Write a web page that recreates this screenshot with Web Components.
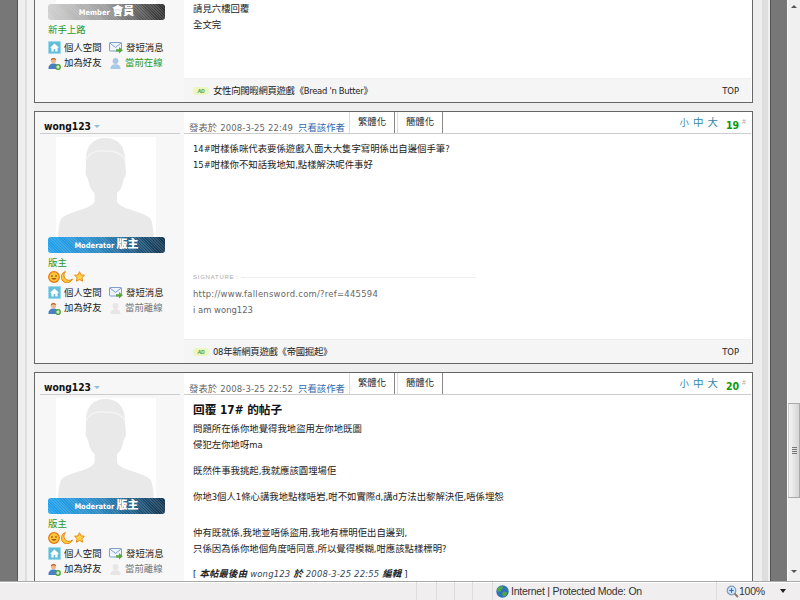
<!DOCTYPE html>
<html lang="zh-Hant"><head><meta charset="utf-8"><title>Forum</title>
<style>
html,body{margin:0;padding:0;height:100%;overflow:hidden;background:#eee}
body{font:9.4px/15.6px "DejaVu Sans","Noto Sans CJK TC",sans-serif;font-stretch:condensed;color:#222}
</style></head><body>
<forum-window>
  <forum-post cut footer="女性向闊暇網頁遊戲《Bread 'n Butter》" badge="Member 會員" tone="grey" rank="新手上路" online style="height:103px">
    <p class="tight">請見六樓回覆</p><p class="tight">全文完</p>
  </forum-post>
  <forum-post name="wong123" time="2008-3-25 22:49" num="19" footer="08年新網頁遊戲《帝國掘起》" badge="Moderator 版主" tone="blue" rank="版主" stars style="height:253px">
    <p class="tight">14#咁樣係咪代表要係遊戲入面大大隻字寫明係出自邊個手筆?</p>
    <p class="tight">15#咁樣你不知話我地知,點樣解決呢件事好</p>
    <post-signature>
      <div style="letter-spacing:.25px">http://www.fallensword.com/?ref=445594</div><div>i am wong123</div>
    </post-signature>
  </forum-post>
  <forum-post name="wong123" time="2008-3-25 22:52" num="20" badge="Moderator 版主" tone="blue" rank="版主" stars style="height:270px">
    <h2>回覆 17# 的帖子</h2>
    <p class="tight">問題所在係你地覺得我地盜用左你地既圖</p>
    <p>侵犯左你地呀ma</p>
    <p>既然件事我挑起,我就應該圓埋場佢</p>
    <p style="margin-bottom:21px">你地3個人1條心講我地點樣唔岩,咁不如實際d,講d方法出黎解決佢,唔係埋怨</p>
    <p class="tight">仲有既就係,我地並唔係盜用,我地有標明佢出自邊到,</p>
    <p style="margin-bottom:9.5px">只係因為係你地個角度唔同意,所以覺得模糊,咁應該點樣標明?</p>
    <p style="letter-spacing:.2px">[ <i><b>本帖最後由</b> <span style="color:#345">wong123</span> <b>於</b> <span style="color:#345">2008-3-25 22:55</span> <b>編輯</b></i> ]</p>
  </forum-post>
</forum-window>
<script>
const ICONS={
home:'<svg width="13" height="13" viewBox="0 0 13 13"><rect width="13" height="13" rx="2" fill="#62bddb"/><rect x=".5" y=".5" width="12" height="12" rx="1.5" fill="none" stroke="#9fdaec"/><path d="M6.5 2.6 2 6.8h1.4v3.8h2.3V8h1.6v2.6h2.3V6.8H11z" fill="#fff"/></svg>',
mail:'<svg width="14" height="13" viewBox="0 0 14 13"><rect x=".5" y="1.5" width="12" height="8.5" rx=".8" fill="#eef4fb" stroke="#7f9fcb"/><path d="M.8 2 6.5 6.4 12.2 2" fill="none" stroke="#7f9fcb"/><path d="M7 8.2h3V6l3.8 3.3L10 12.6v-2H7z" fill="#58a83a"/></svg>',
add:'<svg width="13" height="13" viewBox="0 0 13 13"><circle cx="5.5" cy="3.4" r="2.7" fill="#eeb98a"/><path d="M2.8 3C2.9.7 8 .4 8.2 3 6.8 2 4.5 2 2.8 3z" fill="#a8521e"/><path d="M.5 12c-.4-3.6 2-5.5 5-5.5s4.600 1.500 4.600 5.500z" fill="#4a7fc4"/><circle cx="10" cy="10" r="2.900" fill="#48a030"/><path d="M10 8.300v3.400M8.300 10h3.400" stroke="#fff" stroke-width="1.100"/></svg>',
online:'<svg width="13" height="13" viewBox="0 0 13 13"><circle cx="6.500" cy="4" r="2.900" fill="#a9c8e6"/><path d="M1.500 12c0-3.500 2.200-4.800 5-4.800s5 1.300 5 4.800z" fill="#a9c8e6"/></svg>',
offline:'<svg width="13" height="13" viewBox="0 0 13 13"><circle cx="6.500" cy="4" r="2.900" fill="#e6e6e6"/><path d="M1.500 12c0-3.500 2.200-4.800 5-4.800s5 1.300 5 4.800z" fill="#e6e6e6"/></svg>',
sun:'<svg width="12" height="12" viewBox="0 0 12 12"><circle cx="6" cy="6" r="5.300" fill="#ffc83c" stroke="#e8740c" stroke-width="1.200"/><path d="M3 5h2M7 5h2" stroke="#8a3c00"/><path d="M3.500 7.200h5C8 9 4 9 3.500 7.200z" fill="#8a3c00"/></svg>',
moon:'<svg width="12" height="12" viewBox="0 0 12 12"><path d="M4.500.6A5.700 5.700 0 1 0 11.400 8 5 5 0 0 1 4.500.6z" fill="#ffc83c" stroke="#e8840c"/></svg>',
star:'<svg width="11" height="11" viewBox="0 0 11 11"><path d="m5.500.7 1.500 3.200 3.400.4-2.500 2.400.7 3.500-3.100-1.800-3.100 1.800.7-3.500L.6 4.300 4 3.900z" fill="#ffd24c" stroke="#ea8a10"/></svg>',
globe:'<svg width="13" height="13" viewBox="0 0 13 13"><circle cx="6.500" cy="6.500" r="6.200" fill="#2f72b8"/><path d="M3 2c2-1 4-1 4 .5S5 4 5 5.500 3 7 1.500 6.500 1.500 3 3 2zM7 7c2-.5 4 0 4 1.500S9 12 7.500 11.500 6 8 7 7z" fill="#4fa74a"/></svg>',
zoom:'<svg width="13" height="13" viewBox="0 0 13 13"><circle cx="5.500" cy="5.500" r="4.300" fill="#cfe3f7" stroke="#7d9cc0" stroke-width="1.200"/><path d="M5.500 3.300v4.400M3.300 5.500h4.400" stroke="#2e6fc0" stroke-width="1.200"/><path d="m8.500 8.500 3.500 3.500" stroke="#8a7a60" stroke-width="1.800"/></svg>',
avatar:'<svg width="100" height="100" viewBox="0 0 100 100"><rect width="100" height="100" fill="#fff"/><path d="M30 23C30 6 40 1 49.500 1S69 6 69 23c0 4 .7 8 1 12 .4 4-2 5.500-2.500 8-1 5-2.500 10-6.500 13v7.500c0 3 3 5 10 8 10 3.500 21 6 24 11 1.500 4 2.500 10 2.700 17.500H2c.3-7.500 1.300-13.500 2.700-17.500 3-5 14-7.500 24-11 7-3 10-5 10-8V56c-4-3-5.500-8-6.500-13-.5-2.500-2.900-4-2.500-8 .3-4 .3-8 .3-12z" fill="#e9e9e9"/><path d="M30 23c3-8 12-10 20-9 8 0 16 2 19 9" fill="none" stroke="#f3f3f3" stroke-width="1.500"/></svg>'
};
function def(name,css,html){
  customElements.define(name,class extends HTMLElement{
    connectedCallback(){
      if(this.shadowRoot)return;
      const s=this.attachShadow({mode:'open'});
      s.innerHTML='<style>'+css+'</style>'+(typeof html==='function'?html(this):html);
    }
  });
}
const FONT='"DejaVu Sans","Noto Sans CJK TC",sans-serif';
def('ui-icon',':host{display:inline-flex;line-height:0;flex:none}',h=>ICONS[h.getAttribute('name')]||'');

def('forum-window',`
:host{display:flex;flex-direction:column;width:800px;height:600px;overflow:hidden;background:#eee}
.view{flex:1;min-height:0;display:flex}
.band{flex:none}
.posts{width:719px;flex:none;overflow:hidden;display:flex;flex-direction:column;gap:8px}
::slotted(forum-post){flex:none}
`,`<div class="view">
<div class="band" style="width:17px;background:#777"></div>
<div class="band" style="width:1px;background:#555"></div>
<div class="band" style="width:7px;background:#efefef"></div>
<div class="band" style="width:2px;background:#dedede"></div>
<div class="band" style="width:7px;background:#f2f2f2"></div>
<div class="posts"><slot></slot></div>
<div class="band" style="width:9px;background:#eee"></div>
<div class="band" style="width:6px;background:#dedede"></div>
<div class="band" style="width:2px;background:#efefef"></div>
<div class="band" style="width:1px;background:#555"></div>
<div class="band" style="width:16px;background:#777"></div>
<div class="band" style="width:1px;background:#fff"></div>
<page-scrollbar></page-scrollbar>
</div><status-bar></status-bar>`);

def('page-scrollbar',`
:host{display:flex;flex-direction:column;width:12px;flex:none;background:#f0f0f0}
.a{height:4px;display:flex;justify-content:center;flex:none}
.up{margin-top:5px;width:0;height:0;border:3px solid transparent;border-top:0;border-bottom:3px solid #555}
.dn{width:0;height:0;border:3px solid transparent;border-bottom:0;border-top:3px solid #555}
.track{flex:1}
.thumb{margin-top:399px;height:93px;border:1px solid #aaa;border-left-color:#ccc;background:linear-gradient(90deg,#f4f4f4,#d4d4d4);display:flex;flex-direction:column;justify-content:center;align-items:center;gap:1px}
.thumb i{display:block;width:5px;height:1px;background:#777}
.bottom{height:11px;flex:none;display:flex;justify-content:center}
`,`<div class="a"><div class="up"></div></div><div class="track"><div class="thumb"><i></i><i></i><i></i><i></i></div></div><div class="bottom"><div class="dn"></div></div>`);

def('status-bar',`
:host{display:flex;height:18px;flex:none;border-top:1px solid #a9a9a9;background:#f0eeee;font:10.5px/18px "Liberation Sans",sans-serif;color:#333;box-shadow:inset 0 1px 0 #fff}
.c{border-right:1px solid #dfdcdc;flex:none}
.z{display:flex;align-items:center;flex:1;padding-left:9px}
.net{display:flex;align-items:center;gap:2px;padding-left:3px;width:220px}
.t{letter-spacing:-.25px;white-space:nowrap}
.ar{width:0;height:0;border:3.5px solid transparent;border-bottom:0;border-top:4px solid #222;margin-left:15px}
`,`<div class="c" style="width:416px"></div><div class="c" style="width:19px"></div><div class="c" style="width:17px"></div><div class="c" style="width:17px"></div><div class="c" style="width:19px"></div>
<div class="c net"><ui-icon name="globe"></ui-icon><span class="t">Internet | Protected Mode: On</span></div>
<div class="z"><ui-icon name="zoom"></ui-icon><span class="t">100%</span><span class="ar"></span></div>`);

def('rank-badge',`
:host{display:block;margin-left:13px;width:117px;height:16px;border-radius:3px;color:#fff;font:bold 7.5px/16px ${FONT};font-stretch:condensed;text-align:center;overflow:hidden;position:relative}
:host([tone=grey]){background:linear-gradient(90deg,#cfcfcf,#9a9a9a 50%,#2e2e2e)}
:host([tone=blue]){background:linear-gradient(90deg,#1ea2ee,#2a8cc8 40%,#14344e)}
.h{position:absolute;inset:0;background:repeating-linear-gradient(45deg,rgba(255,255,255,.14) 0 1px,transparent 1px 2px)}
span{position:relative}
b{font-size:11px}
`,h=>{const [a,b]=h.textContent.trim().split(' ');return `<div class="h"></div><span>${a} <b>${b}</b></span>`});

def('user-links',`
:host{display:grid;grid-template-columns:61px 61px;margin-left:13px;line-height:15.4px}
div{display:flex;align-items:center;gap:3px;white-space:nowrap;height:15.4px}
.on{color:#2a9a2a}.off{color:#777}
`,h=>{const on=h.hasAttribute('online');return `<div><ui-icon name="home"></ui-icon>個人空間</div><div><ui-icon name="mail"></ui-icon>發短消息</div><div><ui-icon name="add"></ui-icon>加為好友</div><div><ui-icon name="${on?'online':'offline'}"></ui-icon><span class="${on?'on':'off'}">${on?'當前在線':'當前離線'}</span></div>`});

def('post-signature',`
:host{display:block;margin-top:100px;color:#666}
.s{display:flex;align-items:center;gap:2px;width:283px;height:10px;margin-bottom:4px;font:6px/10px "Liberation Sans",sans-serif;letter-spacing:.75px;color:#aaa;white-space:nowrap}
.s i{flex:1;height:1px;background:#eee}
`,`<div class="s">SIGNATURE :<i></i></div><slot></slot>`);

def('ad-tag',`
:host{display:inline-block;width:16px;height:8px;background:#eaf7c0;border-radius:4px 5px 5px 4px;color:#5a9a1a;font:bold italic 5px/8px "Liberation Sans",sans-serif;text-align:center;flex:none}
`,`AD`);

def('forum-post',`
:host{display:grid;grid-template-columns:149px 1fr;box-sizing:border-box;border:1px solid #666;background:#fff;overflow:hidden}
:host([cut]){border-top:0}
.side{background:#f7f7f7;min-width:0;display:flex;flex-direction:column}
.name{margin:0 4px 0 5px;height:22px;box-sizing:border-box;padding:8px 0 0 4px;border-bottom:1px solid #ccc;font:bold 10.2px/13px ${FONT};font-stretch:condensed;color:#111;display:flex;align-items:center;gap:3px}
.name i{width:0;height:0;border:3px solid transparent;border-bottom:0;border-top:3px solid #8cc0e0}
.av{margin:3px 0 0 21px;width:100px;height:100px;overflow:hidden;line-height:0;flex:none}
:host([cut]) .av{margin-top:0;height:4px;background:#fff}
:host([cut]) .av ui-icon{display:none}
.rank{margin:3px 0 0 13px;height:14px;line-height:14px;color:#2a9a2a}
.st{margin-left:13px;height:13px;display:flex;align-items:center;gap:1px}
user-links{margin-top:2px}
:host([cut]) user-links{margin-top:3px}
.main{min-width:0;display:flex;flex-direction:column}
.head{height:21px;margin-right:1px;flex:none;display:flex;align-items:flex-end;border-bottom:1.5px solid #ccc;padding-left:5px;color:#666;white-space:nowrap}
.meta{width:160px;line-height:14px;height:14px;margin-bottom:-2px;display:flex;gap:3px}
.meta .d{letter-spacing:.15px}
.meta a{color:#36a;margin-left:2px}
.tab{width:46px;height:21px;box-sizing:border-box;border-left:1px solid #ddd;border-right:1px solid #888;text-align:center;line-height:19px;color:#222;background:#fff}
.tab+.tab{margin-left:2px}
.size{margin-left:auto;display:flex;align-items:center;height:21px;color:#38a;gap:4px;line-height:1}
.size .s1{font-size:9.4px}.size .s2,.size .s3{font-size:10.5px}
.num{margin-left:8px;margin-right:5px;padding-bottom:2px;font:bold 10.5px/1 ${FONT};font-stretch:condensed;color:#0a9a0a;display:flex;align-self:center;padding-top:7px}
.num sup{font:normal 7px/7px "Liberation Sans",sans-serif;color:#aaa;margin-left:3px;margin-top:-2px}
.body{flex:1;min-height:0;padding:7px 9px 0;overflow:hidden}
:host([cut]) .body{padding-top:1px}
::slotted(p){margin:0 0 10.4px}
::slotted(p.tight){margin-bottom:0}
::slotted(h2){margin:0 0 3px;font:bold 11.7px/16px ${FONT};font-stretch:condensed;color:#111}
.foot{flex:none;height:24.5px;margin-right:1px;box-sizing:border-box;border-top:1px solid #eee;background:#f5f5f5;display:flex;align-items:center;gap:4px;padding:2px 12px 0 9px}
.foot .ft{letter-spacing:-.3px}
.foot .top{margin-left:auto;color:#222}
`,h=>{
  const g=n=>h.getAttribute(n);
  const stars=h.hasAttribute('stars');
  const cut=h.hasAttribute('cut');
  return `<div class="side">
  ${cut?'':`<div class="name">${g('name')}<i></i></div>`}
  <div class="av"><ui-icon name="avatar"></ui-icon></div>
  <rank-badge tone="${g('tone')}">${g('badge')}</rank-badge>
  <div class="rank">${g('rank')}</div>
  ${stars?'<div class="st"><ui-icon name="sun"></ui-icon><ui-icon name="moon"></ui-icon><ui-icon name="star"></ui-icon></div>':''}
  <user-links ${h.hasAttribute('online')?'online':''}></user-links>
</div>
<div class="main">
  ${cut?'':`<div class="head"><div class="meta"><span>發表於</span><span class="d">${g('time')}</span><a>只看該作者</a></div><div class="tab">繁體化</div><div class="tab">簡體化</div><div class="size"><span class="s1">小</span><span class="s2">中</span><span class="s3">大</span></div><div class="num">${g('num')}<sup>#</sup></div></div>`}
  <div class="body"><slot></slot></div>
  ${g('footer')?`<div class="foot"><ad-tag></ad-tag><span class="ft">${g('footer')}</span><span class="top">TOP</span></div>`:''}
</div>`;
});
</script>
</body></html>
